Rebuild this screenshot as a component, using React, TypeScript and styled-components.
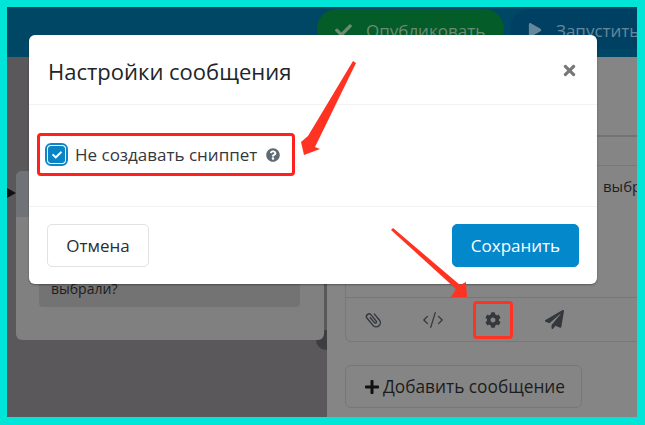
import React from "react";
import styled, { createGlobalStyle } from "styled-components";
import { CodeXml } from "lucide-react";
import {
  FaCheck,
  FaCog,
  FaPaperPlane,
  FaPlay,
  FaPlus,
  FaQuestionCircle,
  FaTimes,
} from "react-icons/fa";

const GlobalStyle = createGlobalStyle`
  html, body {
    margin: 0;
    padding: 0;
    background: #00e5d8;
  }
  * {
    box-sizing: border-box;
  }
`;

const Frame = styled.div`
  position: relative;
  width: 645px;
  height: 425px;
  padding: 7px 8px 8px 7px;
  background: #00e5d8;
  font-family: "Open Sans", "Noto Sans", sans-serif;
  overflow: hidden;
`;

const Page = styled.div`
  display: flex;
  flex-direction: column;
  height: 100%;
  overflow: hidden;
`;

const TopBar = styled.header`
  display: flex;
  flex: 0 0 50px;
  gap: 6px;
  padding: 2px 0 0 310px;
  background: #004766;
`;

const Pill = styled.div<{ $tone: "green" | "blue"; $width: number }>`
  display: flex;
  flex: 0 0 auto;
  align-items: center;
  gap: 14px;
  width: ${(p) => p.$width}px;
  height: 40px;
  padding: 2px 0 0 18px;
  border-radius: 20px;
  background: ${(p) => (p.$tone === "green" ? "#045c28" : "#004062")};
  color: ${(p) => (p.$tone === "green" ? "#6d8a76" : "#66889c")};
  font-size: 17px;
  white-space: nowrap;
`;

const Columns = styled.div`
  display: flex;
  flex: 1;
  min-height: 0;
`;

const LeftPanel = styled.section`
  isolation: isolate;
  flex: 0 0 320px;
  padding: 114px 3px 0 9px;
  background: #5a585a;
  overflow: hidden;
`;

const Card = styled.div`
  position: relative;
  height: 169px;
  border-radius: 6px;
  background: #808080;
`;

const CardHead = styled.div`
  height: 46px;
  border-radius: 6px 6px 0 0;
  background: #6f7276;
`;

const Handle = styled.span`
  position: absolute;
  top: 17px;
  left: -9px;
  border-top: 5px solid transparent;
  border-bottom: 5px solid transparent;
  border-left: 9px solid #111;
`;

const Dot = styled.span`
  position: absolute;
  right: -12px;
  bottom: -10px;
  z-index: -1;
  width: 20px;
  height: 20px;
  border-radius: 50%;
  background: #3e3e42;
`;

const Bubble = styled.div`
  display: flex;
  align-items: flex-end;
  height: 77px;
  margin: 13px 24px 0 23px;
  padding: 0 12px 9px;
  border-radius: 4px;
  background: #737373;
  color: #1c1c1c;
  font-size: 14px;
`;

const RightPanel = styled.section`
  flex: 1;
  min-width: 0;
  padding-left: 18px;
  background: #858585;
`;

const TabStrip = styled.div`
  height: 80px;
  margin-left: -18px;
  border-bottom: 2px solid #737373;
`;

const Composer = styled.div`
  width: 320px;
  margin-top: 28px;
  border: 1px solid #787878;
  border-radius: 6px;
`;

const MessageArea = styled.div`
  height: 132px;
  padding: 10px 0 0 257px;
  border-bottom: 1px solid #777;
  color: #1e1e1e;
  font-size: 15px;
  white-space: nowrap;
`;

const Toolbar = styled.div`
  display: flex;
  align-items: center;
  height: 43px;
  padding-left: 18px;
  color: #34383c;
`;

const ToolSlot = styled.span<{ $width: number }>`
  display: flex;
  flex: 0 0 ${(p) => p.$width}px;
  align-items: center;
  justify-content: flex-start;
`;

const GearMark = styled.span`
  display: flex;
  flex: 0 0 40px;
  align-items: center;
  justify-content: center;
  width: 40px;
  height: 38px;
  margin-right: 32px;
  border: 3px solid #ff3322;
  border-radius: 4px;
`;

const AddButton = styled.div`
  display: flex;
  align-items: center;
  gap: 3px;
  width: 237px;
  height: 43px;
  margin-top: 23px;
  padding-left: 18px;
  border: 1px solid #777;
  border-radius: 6px;
  color: #1c1c1c;
  font-size: 17.3px;
  white-space: nowrap;
`;

const Dialog = styled.div`
  position: absolute;
  top: 35px;
  left: 29px;
  display: flex;
  flex-direction: column;
  width: 568px;
  height: 249px;
  border-radius: 6px;
  background: #fff;
  box-shadow: 0 1px 2px rgba(0, 0, 0, 0.35);
`;

const DialogHead = styled.div`
  display: flex;
  flex: 0 0 70px;
  align-items: center;
  justify-content: space-between;
  padding: 2px 19px 0 19px;
  border-bottom: 1px solid #f2f2f2;
`;

const DialogTitle = styled.h2`
  margin: 0;
  color: #212529;
  font-size: 22px;
  font-weight: 400;
`;

const CloseIcon = styled(FaTimes)`
  color: #777;
  font-size: 17px;
`;

const DialogBody = styled.div`
  display: flex;
  flex: 0 0 102px;
  align-items: flex-start;
  padding: 28px 0 0 8px;
  border-bottom: 1px solid #f2f2f2;
`;

const OptionMark = styled.label`
  display: flex;
  align-items: center;
  width: 258px;
  height: 43px;
  padding-left: 5px;
  border: 3px solid #ff2020;
  border-radius: 4px;
  color: #33383d;
  font-size: 17px;
  white-space: nowrap;
`;

const CheckRing = styled.span`
  display: flex;
  flex: 0 0 23px;
  align-items: center;
  justify-content: center;
  width: 23px;
  height: 23px;
  margin-right: 7px;
  border: 2px solid #0e86c8;
  border-radius: 6px;
`;

const CheckBox = styled.span`
  display: flex;
  align-items: center;
  justify-content: center;
  width: 17px;
  height: 17px;
  border-radius: 3px;
  background: #0b84c6;
  color: #fff;
  font-size: 10px;
`;

const HelpIcon = styled(FaQuestionCircle)`
  flex: none;
  margin-left: 9px;
  color: #5e6a74;
  font-size: 14px;
`;

const DialogFoot = styled.div`
  display: flex;
  flex: 1;
  align-items: flex-start;
  justify-content: space-between;
  padding: 17px 18px 0;
`;

const FootButton = styled.div<{ $primary?: boolean }>`
  display: flex;
  align-items: center;
  justify-content: center;
  width: ${(p) => (p.$primary ? 127 : 102)}px;
  height: 43px;
  border: 1px solid ${(p) => (p.$primary ? "#0488cc" : "#e2e2e2")};
  border-radius: 5px;
  background: ${(p) => (p.$primary ? "#0488cc" : "#fff")};
  color: ${(p) => (p.$primary ? "#fff" : "#2a2e33")};
  font-size: 17px;
`;

const ArrowLayer = styled.svg`
  position: absolute;
  top: 0;
  left: 0;
  pointer-events: none;
`;

const ClipIcon = () => (
  <svg width={19} height={19} viewBox="0 0 16 16" fill="none">
    <path
      d="M11.5 5V11.5a3.5 3.5 0 0 1-7 0V3.7a2.2 2.2 0 0 1 4.4 0V10.5a1 1 0 0 1-2 0V5"
      stroke="currentColor"
      strokeWidth={1.2}
      strokeLinecap="round"
      transform="rotate(-40 8 8)"
    />
  </svg>
);

export default function App() {
  return (
    <>
      <GlobalStyle />
      <Frame>
        <Page>
          <TopBar>
            <Pill $tone="green" $width={187}>
              <FaCheck size={17} />
              Опубликовать
            </Pill>
            <Pill $tone="blue" $width={200}>
              <FaPlay size={14} />
              Запустить
            </Pill>
          </TopBar>
          <Columns>
            <LeftPanel>
              <Card>
                <Handle />
                <Dot />
                <CardHead />
                <Bubble>выбрали?</Bubble>
              </Card>
            </LeftPanel>
            <RightPanel>
              <TabStrip />
              <Composer>
                <MessageArea>выбрали?</MessageArea>
                <Toolbar>
                  <ToolSlot $width={58}>
                    <ClipIcon />
                  </ToolSlot>
                  <ToolSlot $width={51}>
                    <CodeXml size={22} strokeWidth={1.4} />
                  </ToolSlot>
                  <GearMark>
                    <FaCog size={16} />
                  </GearMark>
                  <ToolSlot $width={30}>
                    <FaPaperPlane size={19} />
                  </ToolSlot>
                </Toolbar>
              </Composer>
              <AddButton>
                <FaPlus size={16} color="#111" />
                Добавить сообщение
              </AddButton>
            </RightPanel>
          </Columns>
        </Page>
        <Dialog>
          <DialogHead>
            <DialogTitle>Настройки сообщения</DialogTitle>
            <CloseIcon />
          </DialogHead>
          <DialogBody>
            <OptionMark>
              <CheckRing>
                <CheckBox>
                  <FaCheck />
                </CheckBox>
              </CheckRing>
              Не создавать сниппет
              <HelpIcon />
            </OptionMark>
          </DialogBody>
          <DialogFoot>
            <FootButton>Отмена</FootButton>
            <FootButton $primary>Сохранить</FootButton>
          </DialogFoot>
        </Dialog>
        <ArrowLayer width={645} height={425} viewBox="0 0 645 425">
          <polygon
            points="353,61 356,63 315,147 320,149 304,155 301,142 308,136"
            fill="#ff3322"
          />
          <polygon
            points="391,230 393,228 460,285 466,282 467,297 451,297 456,289"
            fill="#ff3322"
          />
        </ArrowLayer>
      </Frame>
    </>
  );
}
